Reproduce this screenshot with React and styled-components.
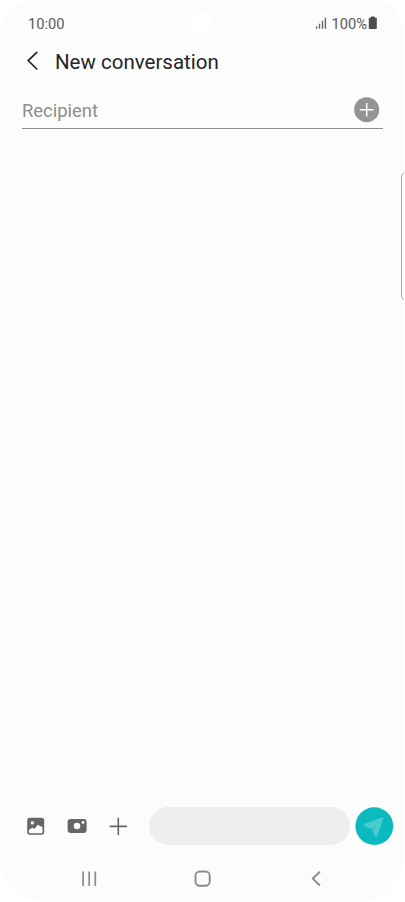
import React from "react";
import styled, { createGlobalStyle } from "styled-components";

const GlobalStyle = createGlobalStyle`
  * {
    box-sizing: border-box;
  }
  body {
    margin: 0;
    background: #fff;
    font-family: Roboto, sans-serif;
  }
`;

const Screen = styled.div`
  position: relative;
  display: flex;
  flex-direction: column;
  width: 404px;
  height: 902px;
  overflow: hidden;
  background: #fcfcfc;
  border-radius: 32px 32px 46px 46px;
  & svg {
    display: block;
    flex-shrink: 0;
    overflow: visible;
  }
`;

const StatusBar = styled.div`
  display: flex;
  justify-content: space-between;
  align-items: center;
  height: 46px;
  padding: 1px 26px 0 28px;
  color: #5a5a5a;
  font-size: 14.7px;
`;

const StatusIcons = styled.div`
  display: flex;
  align-items: center;
`;

const Percent = styled.span`
  margin: 0 1px 0 5px;
`;

const CameraHole = styled.div`
  position: absolute;
  top: 13px;
  left: 192px;
  width: 20px;
  height: 20px;
  border-radius: 50%;
  background: #fff;
`;

const EdgePanel = styled.div`
  position: absolute;
  top: 172px;
  right: -7px;
  width: 10px;
  height: 129px;
  border: 1px solid #aaa;
  border-radius: 5px;
`;

const Header = styled.header`
  display: flex;
  align-items: center;
  gap: 16px;
  height: 30px;
  padding-left: 26px;
`;

const Title = styled.h1`
  margin: 0;
  padding-top: 1px;
  color: #252525;
  font-size: 20.5px;
  font-weight: 400;
  line-height: 30px;
`;

const RecipientField = styled.div`
  display: flex;
  justify-content: space-between;
  align-items: center;
  height: 39px;
  margin: 14px 21px 0 22px;
  padding: 0 4px 0 0;
  border-bottom: 1px solid #8e8e8e;
  color: #8e8e8e;
  font-size: 18.4px;
`;

const RecipientLabel = styled.span`
  padding-top: 3px;
`;

const Messages = styled.main`
  flex: 1;
`;

const Composer = styled.div`
  display: flex;
  align-items: center;
  height: 38px;
  padding: 0 10px 0 26px;
`;

const Attachments = styled.div`
  display: flex;
  justify-content: space-between;
  width: 102px;
`;

const MessageInput = styled.div`
  width: 201px;
  height: 38px;
  margin: 0 6px 0 21px;
  border-radius: 19px;
  background: #eee;
`;

const NavBar = styled.nav`
  display: flex;
  justify-content: space-between;
  align-items: center;
  height: 57px;
  padding: 10px 78px 0 80px;
`;

function SignalIcon() {
  return (
    <svg width="11" height="13" viewBox="0 0 11 13" fill="#666">
      <rect x="0.9" y="9.4" width="1.4" height="2.3" />
      <rect x="3.8" y="6.7" width="1.4" height="5" />
      <rect x="6.8" y="3.7" width="1.4" height="8" />
      <rect x="9.7" y="0.7" width="1.4" height="11" />
    </svg>
  );
}

function BatteryIcon() {
  return (
    <svg width="10" height="13" viewBox="0 0 10 13" fill="#4d4d4d">
      <rect x="2.8" y="-0.4" width="4" height="2" rx="0.6" />
      <rect x="0.8" y="0.8" width="8" height="11.3" rx="0.8" />
    </svg>
  );
}

function BackIcon() {
  return (
    <svg width="13" height="20" viewBox="0 0 13 20" fill="none" stroke="#1d1d1d">
      <path d="M10.8 1.4 2.2 9.6l8.6 8.4" strokeWidth="1.6" strokeLinecap="round" />
    </svg>
  );
}

function AddIcon() {
  return (
    <svg width="25" height="25" viewBox="0 0 25 25">
      <circle cx="12.7" cy="12.7" r="12.5" fill="#949494" />
      <path d="M12.7 6.4v12.6M6.4 12.7h12.6" stroke="#fff" strokeWidth="1.5" strokeLinecap="round" />
    </svg>
  );
}

function GalleryIcon() {
  return (
    <svg width="20" height="20" viewBox="0 0 20 20">
      <rect x="1.2" y="1.7" width="17" height="17" rx="2.8" fill="#666" />
      <circle cx="6.3" cy="6.9" r="1.7" fill="#fcfcfc" />
      <path
        d="M2.9 14 5.6 12q.7-.5 1.4 0l1.4.9 3-3.7q.7-.7 1.4 0l1.3 1.3.7-.3q.6-.2 1 .3l.7.9v4.5q0 1.3-1.3 1.3H4.2q-1.3 0-1.3-1.3z"
        fill="#fcfcfc"
      />
    </svg>
  );
}

function CameraIcon() {
  return (
    <svg width="20" height="20" viewBox="0 0 20 20">
      <rect x="0.6" y="3" width="19" height="14" rx="3" fill="#666" />
      <circle cx="10" cy="10" r="3.3" fill="#fcfcfc" />
      <circle cx="16" cy="6.5" r="1.4" fill="#fcfcfc" />
    </svg>
  );
}

function PlusIcon() {
  return (
    <svg width="20" height="20" viewBox="0 0 20 20">
      <path d="M10.3 2.3v16.2M2.2 10.4h16.2" stroke="#666" strokeWidth="1.6" strokeLinecap="round" />
    </svg>
  );
}

function SendIcon() {
  return (
    <svg width="38" height="38" viewBox="0 0 38 38">
      <circle cx="18.3" cy="19.1" r="18.9" fill="#0bbabf" />
      <path
        d="M8.5 17 25.6 10.3q1.9-.5 1.5 1.5L21.3 28.7q-1.1 2.1-2.5.2l-2.9-6.2 4.5-5-5.1 4.2L8.2 19q-1.4-1.1.3-2z"
        fill="#4accce"
      />
    </svg>
  );
}

function RecentsIcon() {
  return (
    <svg width="18" height="18" viewBox="0 0 18 18">
      <path d="M3.1 1.6v14.4M9.2 1.6v14.4M15.3 1.6v14.4" stroke="#8b8b8b" strokeWidth="1.7" />
    </svg>
  );
}

function HomeIcon() {
  return (
    <svg width="18" height="18" viewBox="0 0 18 18">
      <rect x="1.5" y="1.5" width="14.2" height="14.2" rx="4.2" fill="none" stroke="#8b8b8b" strokeWidth="1.9" />
    </svg>
  );
}

function NavBackIcon() {
  return (
    <svg width="18" height="18" viewBox="0 0 18 18">
      <path d="M11.9 1.8 4.8 8.6l7.1 6.9" fill="none" stroke="#8b8b8b" strokeWidth="1.9" />
    </svg>
  );
}

function App() {
  return (
    <>
      <GlobalStyle />
      <Screen>
        <StatusBar>
          <span>10:00</span>
          <StatusIcons>
            <SignalIcon />
            <Percent>100%</Percent>
            <BatteryIcon />
          </StatusIcons>
        </StatusBar>
        <Header>
          <BackIcon />
          <Title>New conversation</Title>
        </Header>
        <RecipientField>
          <RecipientLabel>Recipient</RecipientLabel>
          <AddIcon />
        </RecipientField>
        <Messages />
        <Composer>
          <Attachments>
            <GalleryIcon />
            <CameraIcon />
            <PlusIcon />
          </Attachments>
          <MessageInput />
          <SendIcon />
        </Composer>
        <NavBar>
          <RecentsIcon />
          <HomeIcon />
          <NavBackIcon />
        </NavBar>
        <CameraHole />
        <EdgePanel />
      </Screen>
    </>
  );
}

export default App;
